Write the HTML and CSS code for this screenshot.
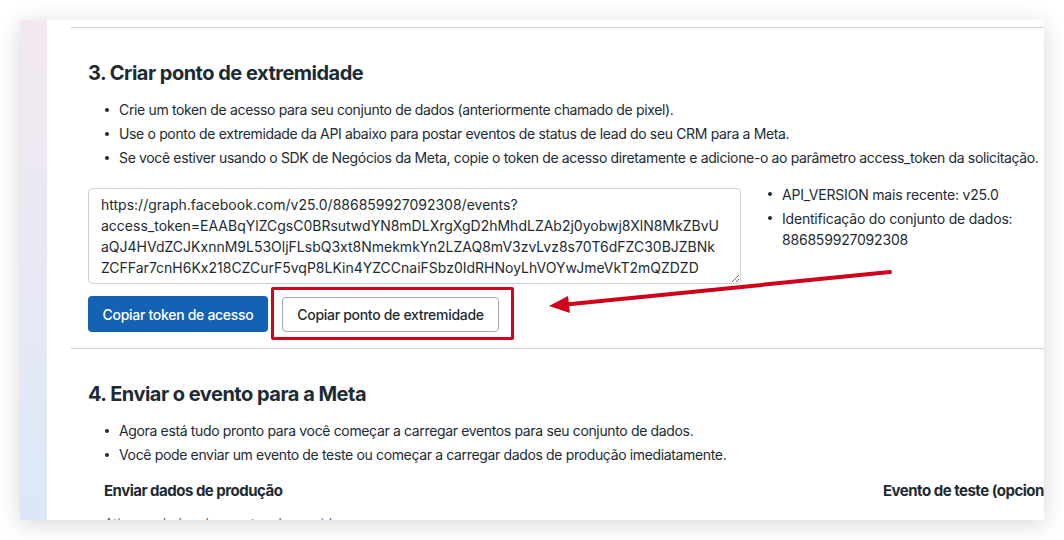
FILE: index.html
```html
<!DOCTYPE html>
<html lang="pt-BR">
<head>
<meta charset="utf-8">
<title>Criar ponto de extremidade</title>
<link rel="stylesheet" href="styles.css">
</head>
<body>
<div class="stage">
  <div class="window">
    <div class="strip"></div>
    <div class="main">
      <section class="section">
        <h2 class="title">3. Criar ponto de extremidade</h2>
        <ul class="bullets">
          <li>Crie um token de acesso para seu conjunto de dados (anteriormente chamado de pixel).</li>
          <li>Use o ponto de extremidade da API abaixo para postar eventos de status de lead do seu CRM para a Meta.</li>
          <li>Se você estiver usando o SDK de Negócios da Meta, copie o token de acesso diretamente e adicione-o ao parâmetro access_token da solicitação.</li>
        </ul>
        <div class="endpoint">
          <textarea class="code" readonly wrap="off">https://graph.facebook.com/v25.0/886859927092308/events?
access_token=EAABqYlZCgsC0BRsutwdYN8mDLXrgXgD2hMhdLZAb2j0yobwj8XlN8MkZBvU
aQJ4HVdZCJKxnnM9L53OljFLsbQ3xt8NmekmkYn2LZAQ8mV3zvLvz8s70T6dFZC30BJZBNk
ZCFFar7cnH6Kx218CZCurF5vqP8LKin4YZCCnaiFSbz0IdRHNoyLhVOYwJmeVkT2mQZDZD</textarea>
          <ul class="info">
            <li>API_VERSION mais recente: v25.0</li>
            <li><span>Identificação do conjunto de dados:<span class="block">886859927092308</span></span></li>
          </ul>
        </div>
        <div class="actions">
          <button class="btn btn-primary" type="button">Copiar token de acesso</button>
          <button class="btn btn-secondary" type="button">Copiar ponto de extremidade</button>
        </div>
      </section>
      <section class="section">
        <h2 class="title">4. Enviar o evento para a Meta</h2>
        <ul class="bullets">
          <li>Agora está tudo pronto para você começar a carregar eventos para seu conjunto de dados.</li>
          <li>Você pode enviar um evento de teste ou começar a carregar dados de produção imediatamente.</li>
        </ul>
        <div class="cols">
          <div class="col col-main">
            <h3 class="subtitle">Enviar dados de produção</h3>
            <p class="note">Ative os dados de eventos do servidor</p>
          </div>
          <div class="col col-side">
            <h3 class="subtitle">Evento de teste (opcional)</h3>
          </div>
        </div>
      </section>
    </div>
  </div>
</div>
<div class="highlight"></div>
<svg class="arrow" width="1064" height="540" viewBox="0 0 1064 540" xmlns="http://www.w3.org/2000/svg">
  <line x1="890" y1="272" x2="566" y2="304.5" stroke="#d0021b" stroke-width="4" stroke-linecap="round"/>
  <polygon points="549,306 570,313 568,296" fill="#d0021b"/>
</svg>
</body>
</html>
```

FILE: styles.css
```css
html, body {
  margin: 0;
  padding: 0;
}

body {
  position: relative;
  width: 1064px;
  height: 540px;
  overflow: hidden;
  background: #ffffff;
  font-family: Inter, "Noto Sans", sans-serif;
  color: #1c2b33;
}

.stage {
  padding: 20px;
}

.window {
  display: flex;
  width: 1024px;
  height: 500px;
  overflow: hidden;
  background: #ffffff;
  box-shadow: 0 4px 22px rgba(0, 0, 0, 0.16);
}

.strip {
  flex: none;
  width: 27px;
  background: linear-gradient(180deg, #f3e8ef 0%, #e8e8f4 50%, #dce8f7 100%);
}

.main {
  flex: 1;
  min-width: 0;
  padding: 7px 0 0 24px;
}

.section {
  border-top: 1px solid #cdd1d6;
  padding: 33px 0 16px 17px;
}

.title {
  margin: 0;
  font-size: 20px;
  line-height: 24px;
  font-weight: 700;
  letter-spacing: -0.5px;
}

.bullets {
  list-style: none;
  margin: 13px 0 0;
  padding: 0 0 0 17px;
  font-size: 14px;
  line-height: 24px;
  letter-spacing: -0.35px;
}

.bullets li,
.info li {
  display: flex;
  white-space: nowrap;
}

.bullets li::before,
.info li::before {
  content: "";
  flex: none;
  width: 4px;
  height: 4px;
  margin: 10px 10px 0 0;
  border-radius: 50%;
  background: #1c2b33;
}

.endpoint {
  display: flex;
  align-items: flex-start;
  margin-top: 18px;
}

.code {
  flex: none;
  box-sizing: border-box;
  width: 653px;
  height: 96px;
  margin: 0;
  padding: 5px 12px;
  border: 1px solid #ccd0d5;
  border-radius: 4px;
  font-family: Inter, "Noto Sans", sans-serif;
  font-size: 14px;
  line-height: 21px;
  color: #1c2b33;
  white-space: pre;
  overflow: hidden;
  resize: both;
  background: #ffffff;
}

.info {
  list-style: none;
  margin: -4px 0 0 27px;
  padding: 0;
  font-size: 14px;
  line-height: 21px;
  letter-spacing: -0.2px;
}

.info li + li {
  margin-top: 3px;
}

.info li::before {
  margin-top: 8px;
}

.block {
  display: block;
}

.actions {
  display: flex;
  align-items: center;
  gap: 14px;
  margin-top: 12px;
}

.btn {
  box-sizing: border-box;
  height: 36px;
  margin: 0;
  padding: 0;
  border-radius: 4px;
  font-family: Inter, "Noto Sans", sans-serif;
  font-size: 14px;
  font-weight: 500;
  letter-spacing: -0.3px;
  white-space: nowrap;
}

.btn-primary {
  width: 180px;
  border: none;
  background: #1462b4;
  color: #ffffff;
}

.btn-secondary {
  width: 217px;
  height: 35px;
  border: 1px solid #a3a9b1;
  background: #ffffff;
  color: #1c2b33;
}

.cols {
  display: flex;
  margin-top: 14px;
  padding-left: 16px;
}

.col-main {
  flex: none;
  width: 779px;
}

.col-side {
  flex: none;
  white-space: nowrap;
}

.subtitle {
  margin: 0;
  font-size: 15px;
  line-height: 20px;
  font-weight: 700;
  letter-spacing: -0.5px;
}

.note {
  margin: 13px 0 0;
  font-size: 14px;
  line-height: 20px;
  letter-spacing: -0.35px;
  color: #5d6a72;
}

.highlight {
  position: absolute;
  left: 271px;
  top: 287px;
  box-sizing: border-box;
  width: 243px;
  height: 53px;
  border: 3px solid #d0021b;
  border-radius: 2px;
}

.arrow {
  position: absolute;
  left: 0;
  top: 0;
  pointer-events: none;
}
```
